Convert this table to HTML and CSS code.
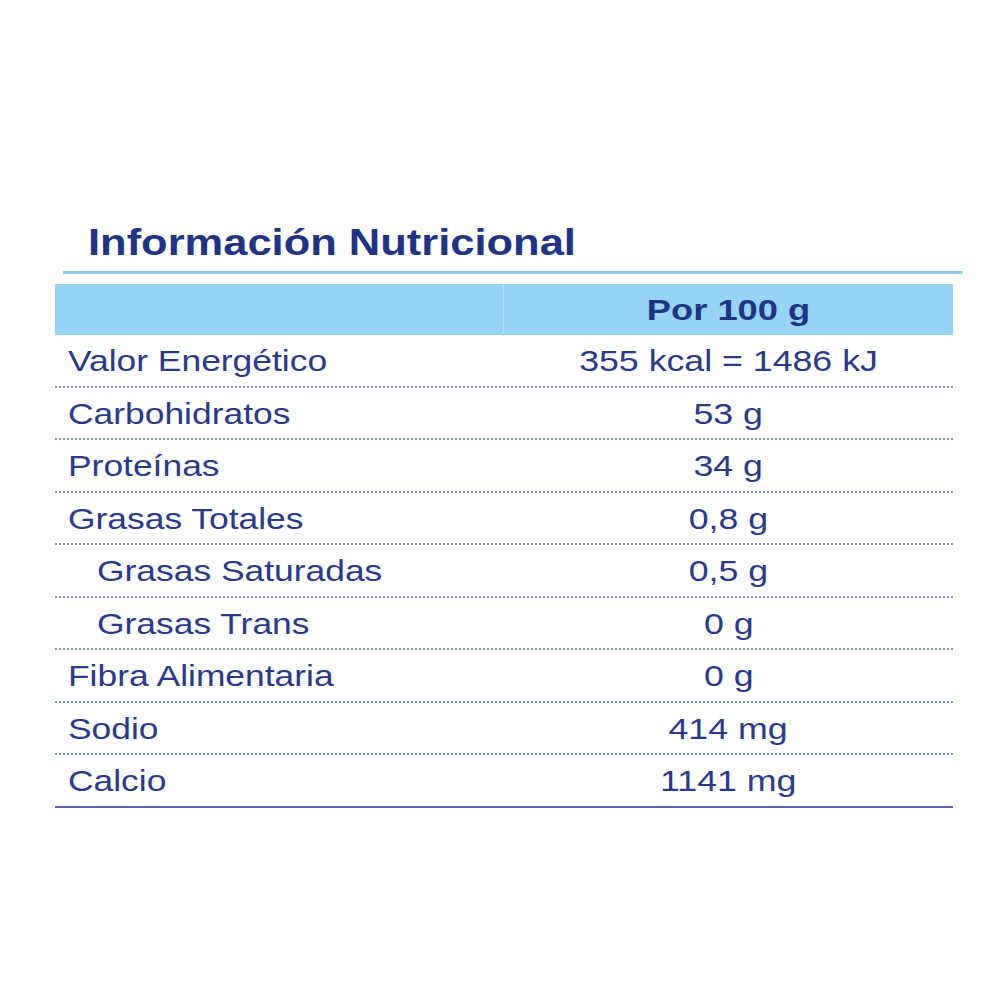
FILE: index.html
```html
<!DOCTYPE html>
<html lang="es">
<head>
<meta charset="utf-8">
<title>Información Nutricional</title>
<link rel="stylesheet" href="styles.css">
</head>
<body>
<main class="panel">
  <h1 class="title"><span class="wide">Información Nutricional</span></h1>
  <div class="rule"></div>
  <div class="table">
    <div class="head">
      <div class="head-label"></div>
      <div class="head-value"><span class="wide">Por 100 g</span></div>
    </div>
    <div class="row"><span class="label"><span class="wide">Valor Energético</span></span><span class="value"><span class="wide">355 kcal = 1486 kJ</span></span></div>
    <div class="row"><span class="label"><span class="wide">Carbohidratos</span></span><span class="value"><span class="wide">53 g</span></span></div>
    <div class="row"><span class="label"><span class="wide">Proteínas</span></span><span class="value"><span class="wide">34 g</span></span></div>
    <div class="row"><span class="label"><span class="wide">Grasas Totales</span></span><span class="value"><span class="wide">0,8 g</span></span></div>
    <div class="row"><span class="label sub"><span class="wide">Grasas Saturadas</span></span><span class="value"><span class="wide">0,5 g</span></span></div>
    <div class="row"><span class="label sub"><span class="wide">Grasas Trans</span></span><span class="value"><span class="wide">0 g</span></span></div>
    <div class="row"><span class="label"><span class="wide">Fibra Alimentaria</span></span><span class="value"><span class="wide">0 g</span></span></div>
    <div class="row"><span class="label"><span class="wide">Sodio</span></span><span class="value"><span class="wide">414 mg</span></span></div>
    <div class="row last"><span class="label"><span class="wide">Calcio</span></span><span class="value"><span class="wide">1141 mg</span></span></div>
  </div>
</main>
</body>
</html>
```
FILE: styles.css
```css
html, body {
  margin: 0;
  padding: 0;
  background: #ffffff;
}
body {
  font-family: "Liberation Sans", Arial, sans-serif;
  color: #28398e;
}
.panel {
  width: 1000px;
  height: 1000px;
  padding-top: 222px;
  box-sizing: border-box;
}
.wide {
  display: inline-block;
  transform: scaleX(1.18);
  transform-origin: left center;
  white-space: nowrap;
}
.title {
  margin: 0 0 0 88px;
  font-size: 37px;
  font-weight: bold;
  line-height: 42px;
  color: #1f3487;
}
.title .wide {
  transform: scaleX(1.175);
}
.rule {
  margin: 7px 0 0 63px;
  width: 900px;
  height: 3px;
  background: #8fd2f0;
}
.table {
  margin: 10px 0 0 55px;
  width: 898px;
}
.head {
  display: grid;
  grid-template-columns: 449px 1fr;
  height: 51px;
  background: #97d3f4;
}
.head-label {
  border-right: 1px solid #b3e0f7;
}
.head-value {
  text-align: center;
  font-weight: bold;
  font-size: 30px;
  line-height: 52px;
  color: #1f3487;
}
.head-value .wide {
  transform: scaleX(1.21);
  transform-origin: center;
}
.row {
  display: grid;
  grid-template-columns: 449px 1fr;
  height: 52.5px;
  box-sizing: border-box;
  border-bottom: 2px dotted #8591c6;
  font-size: 30px;
  line-height: 51px;
}
.row.last {
  border-bottom: 2px solid #5366b2;
}
.label {
  padding-left: 13px;
}
.label.sub {
  padding-left: 42px;
}
.value {
  text-align: center;
}
.value .wide {
  transform: scaleX(1.19);
  transform-origin: center;
}
```
